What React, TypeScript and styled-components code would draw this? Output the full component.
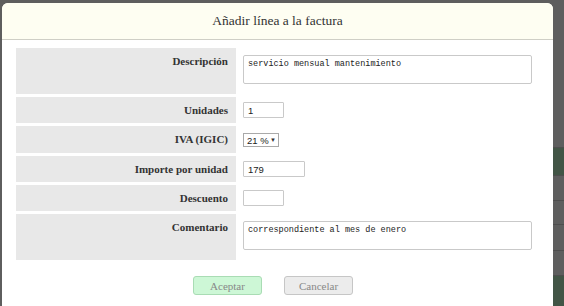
import styled, { createGlobalStyle } from 'styled-components';

const GlobalStyle = createGlobalStyle`
  html, body {
    margin: 0;
    padding: 0;
    background: #ffffff;
    font-family: 'Liberation Serif', serif;
  }
  body {
    width: 564px;
    height: 306px;
    overflow: hidden;
  }
`;

type Field = {
  label: string;
  kind: 'textarea' | 'input' | 'select';
  value?: string;
  width?: number;
};

const fields: Field[] = [
  { label: 'Descripción', kind: 'textarea', value: 'servicio mensual mantenimiento' },
  { label: 'Unidades', kind: 'input', value: '1', width: 41 },
  { label: 'IVA (IGIC)', kind: 'select', value: '21 %' },
  { label: 'Importe por unidad', kind: 'input', value: '179', width: 62 },
  { label: 'Descuento', kind: 'input', value: '', width: 41 },
  { label: 'Comentario', kind: 'textarea', value: 'correspondiente al mes de enero' },
];

// table of the invoice page that sits behind the dialog
const backRows = [
  { text: 'Total', tone: 'head', h: 20 },
  { text: '', tone: 'green', h: 28 },
  { text: '', tone: 'plain', h: 25 },
  { text: 'Desc', tone: 'head', h: 24 },
  { text: '0,00', tone: 'plain', h: 26 },
  { text: '0,00', tone: 'plain', h: 25 },
  { text: '', tone: 'green', h: 40 },
];

export default function App() {
  return (
    <Page>
      <GlobalStyle />
      <BackTable>
        {backRows.map((r, i) => (
          <BackRow key={i} $tone={r.tone} $h={r.h}>
            {r.text}
          </BackRow>
        ))}
      </BackTable>
      <Overlay />
      <Dialog>
        <Header>Añadir línea a la factura</Header>
        <Body>
          <FormGrid>
            {fields.map((f) => (
              <Row key={f.label}>
                <Label>{f.label}</Label>
                <Cell>
                  {f.kind === 'textarea' && <TextArea defaultValue={f.value} />}
                  {f.kind === 'input' && <TextInput $w={f.width ?? 41} defaultValue={f.value} />}
                  {f.kind === 'select' && (
                    <Select>
                      {f.value}
                      <Caret>▼</Caret>
                    </Select>
                  )}
                </Cell>
              </Row>
            ))}
          </FormGrid>
          <Buttons>
            <Button $variant="ok">Aceptar</Button>
            <Button $variant="cancel">Cancelar</Button>
          </Buttons>
        </Body>
      </Dialog>
    </Page>
  );
}

const Page = styled.div`
  position: relative;
  width: 564px;
  height: 306px;
  display: flex;
  justify-content: flex-end;
  overflow: hidden;
  background: #ffffff;
`;

const BackTable = styled.div`
  width: 60px;
  display: flex;
  flex-direction: column;
  padding-top: 128px;
  font-family: 'Liberation Sans', Arial, sans-serif;
  font-size: 11px;
`;

const BackRow = styled.div<{ $tone: string; $h: number }>`
  box-sizing: border-box;
  height: ${(p) => p.$h}px;
  flex-shrink: 0;
  display: flex;
  align-items: center;
  padding-left: 4px;
  border-bottom: 1px solid #d4d4d4;
  color: #222;
  font-weight: ${(p) => (p.$tone === 'head' ? 700 : 400)};
  background: ${(p) => (p.$tone === 'green' ? '#b3e6bd' : '#ffffff')};
`;

const Overlay = styled.div`
  position: absolute;
  inset: 0;
  background: rgba(0, 0, 0, 0.63);
`;

const Dialog = styled.div`
  position: absolute;
  left: 2px;
  top: 3px;
  width: 551px;
  height: 330px;
  background: #ffffff;
  border-radius: 6px;
  overflow: hidden;
  display: flex;
  flex-direction: column;
`;

const Header = styled.div`
  height: 36px;
  display: flex;
  align-items: center;
  justify-content: center;
  background: #fefef2;
  border-bottom: 1px solid #cfcfc6;
  font-family: 'Liberation Serif', serif;
  font-size: 13.5px;
  color: #333333;
`;

const Body = styled.div`
  padding: 8px 13px 0 14px;
`;

const FormGrid = styled.div`
  display: flex;
  flex-direction: column;
  gap: 3px;
`;

const Row = styled.div`
  display: grid;
  grid-template-columns: 220px 1fr;
`;

const Label = styled.div`
  background: #e8e8e8;
  text-align: right;
  padding: 6px 8px 0 0;
  font-family: 'Liberation Serif', serif;
  font-weight: 700;
  font-size: 11px;
  line-height: 14px;
  color: #333333;
`;

const Cell = styled.div`
  padding: 5px 0 5px 7px;
  display: flex;
  align-items: flex-start;
`;

const TextArea = styled.textarea`
  box-sizing: border-box;
  width: 289px;
  height: 29px;
  margin: 2px 0 5px;
  padding: 3px 4px;
  border: 1px solid #c9c9c9;
  border-radius: 2px;
  resize: none;
  font-family: 'Liberation Mono', monospace;
  font-size: 8.5px;
  line-height: 11px;
  color: #222;
  outline: none;
`;

const TextInput = styled.input<{ $w: number }>`
  box-sizing: border-box;
  width: ${(p) => p.$w}px;
  height: 16px;
  padding: 0 4px;
  border: 1px solid #c9c9c9;
  border-radius: 1px;
  font-family: 'Liberation Sans', Arial, sans-serif;
  font-size: 9.5px;
  color: #222;
  outline: none;
`;

const Select = styled.div`
  box-sizing: border-box;
  width: 36px;
  height: 14px;
  margin: 2px 0 1px;
  padding: 0 2px 0 3px;
  display: flex;
  align-items: center;
  justify-content: space-between;
  border: 1px solid #a9a9a9;
  font-family: 'Liberation Sans', Arial, sans-serif;
  font-size: 9.5px;
  color: #222;
`;

const Caret = styled.span`
  font-size: 6px;
  color: #333;
`;

const Buttons = styled.div`
  display: flex;
  justify-content: center;
  gap: 22px;
  padding: 16px 10px 0 0;
`;

const Button = styled.button<{ $variant: 'ok' | 'cancel' }>`
  width: 69px;
  height: 19px;
  padding: 0;
  border-radius: 3px;
  border: 1px solid ${(p) => (p.$variant === 'ok' ? '#a9dcb4' : '#c6c6c6')};
  background: ${(p) => (p.$variant === 'ok' ? '#cdf7d6' : '#ececec')};
  font-family: 'Liberation Serif', serif;
  font-size: 11px;
  color: #888888;
`;
